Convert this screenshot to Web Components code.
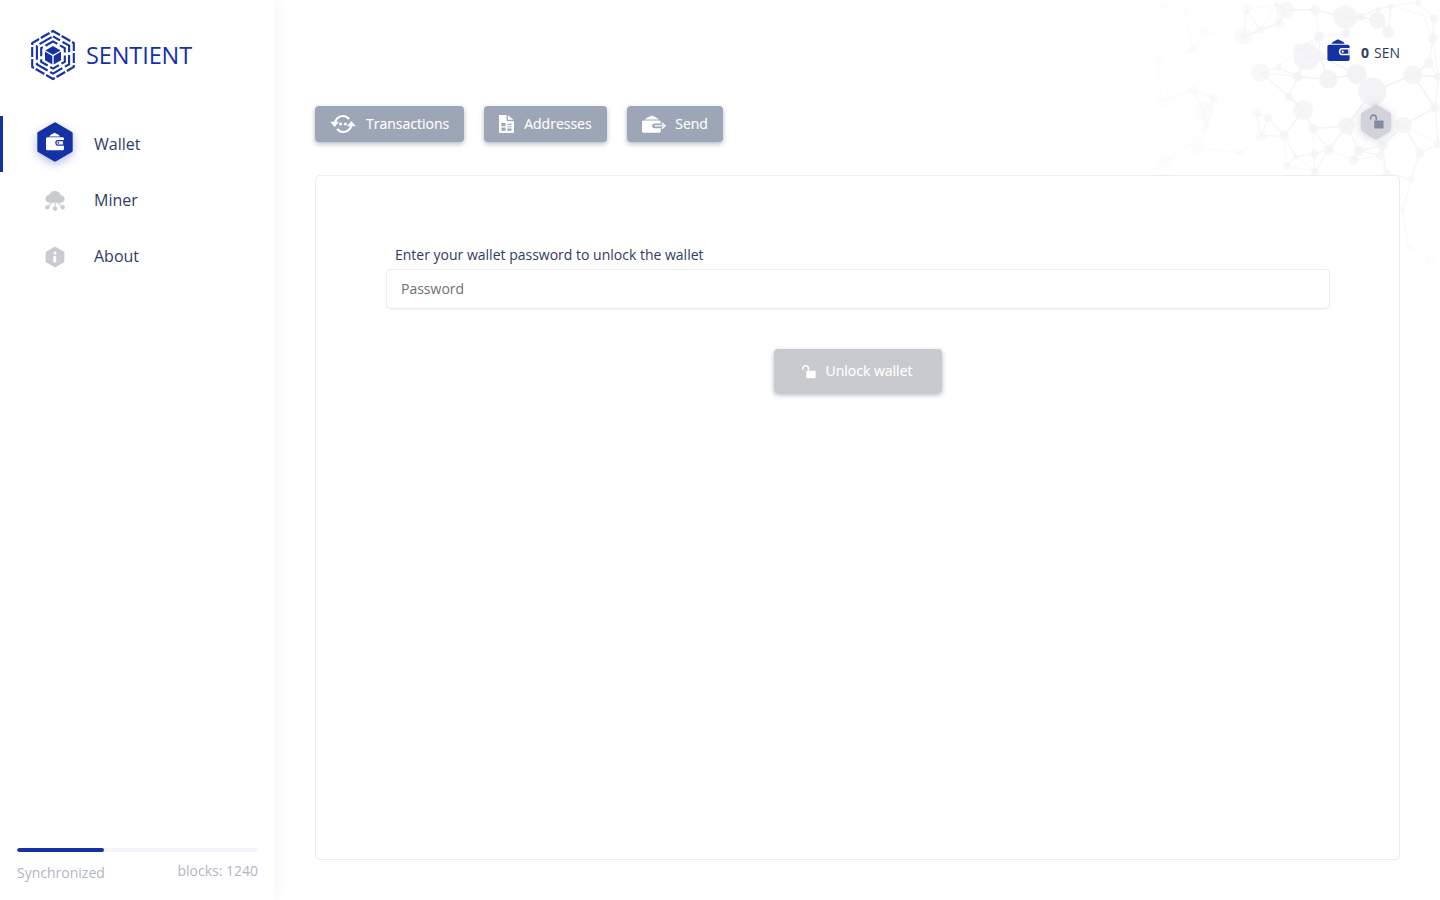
<!DOCTYPE html>
<html lang="en"><head><meta charset="utf-8"><title>Sentient</title>
<style>
html,body{margin:0;height:100%;background:#fff;font-family:"Open Sans","Noto Sans",sans-serif;color:#303c5e}
</style></head><body>
<app-shell>
  <side-bar slot="side">
    <brand-logo></brand-logo>
    <nav-item active icon="wallet">Wallet</nav-item>
    <nav-item icon="miner">Miner</nav-item>
    <nav-item icon="about">About</nav-item>
    <sync-status slot="foot" blocks="1240" percent="36"></sync-status>
  </side-bar>
  <main-view>
    <network-bg slot="bg"></network-bg>
    <wallet-balance slot="top" amount="0" unit="SEN"></wallet-balance>
    <tab-button slot="tabs" icon="tx">Transactions</tab-button>
    <tab-button slot="tabs" icon="addr">Addresses</tab-button>
    <tab-button slot="tabs" icon="send">Send</tab-button>
    <lock-badge slot="lock"></lock-badge>
    <content-card><unlock-form></unlock-form></content-card>
  </main-view>
</app-shell>
<script>
const BLUE='#1431a6';
const walletIcon=(fg,bg)=>`<path fill="${fg}" d="M4.6 5.6 6 3.6 11.4 .8 17.2 3.6 18.4 5.6Z"/><path fill="${fg}" d="M2.4 6.4H21.6C22.8 6.4 23.6 7.2 23.6 8.4V21.4C23.6 22.6 22.8 23.4 21.6 23.4H2.4C1.2 23.4.4 22.6.4 21.4V8.4C.4 7.2 1.2 6.4 2.4 6.4Z"/><path fill="${bg}" d="M15.4 10H23.6V17.4H15.4C13.4 17.4 12.4 15.8 12.4 13.7 12.4 11.6 13.4 10 15.4 10Z"/><path fill="${fg}" d="M15.6 11.6H22.2V15.8H15.6C14.6 15.8 14 14.9 14 13.7 14 12.5 14.6 11.6 15.6 11.6Z"/><circle cx="16.4" cy="13.7" r="1.1" fill="${bg}"/>`;
const ICONS={
 miner:c=>`<path fill="${c}" d="M6 14C2.8 14 .5 12 .5 9.2 .5 6.8 2.4 5 4.8 4.8 5.8 2 8.8 0 12 0 15.4 0 18.2 2.2 19 5 21.6 5 23.5 7 23.5 9.6 23.5 12.2 21.4 14 18 14Z"/><path stroke="${c}" stroke-width="1.3" fill="none" d="M12 13V20M9 13 4 18.5M15 13 20 18.5"/><circle cx="12" cy="21.2" r="2.6" fill="${c}"/><circle cx="2.8" cy="19.6" r="2.6" fill="${c}"/><circle cx="21.2" cy="19.6" r="2.6" fill="${c}"/>`,
 tx:c=>`<g fill="none" stroke="${c}" stroke-width="2.3" stroke-linecap="round"><path d="M4.8 12C5.2 7 9 3.2 13.4 3.2 16 3.2 18 4.4 19.2 6"/><path d="M22.4 12C22 17 18.2 20.8 13.8 20.8 11.4 20.8 9.4 19.8 8 18"/></g><path fill="${c}" d="M.2 9.6H9.4L4.8 15.2ZM17.6 14.4H26.8L22.2 8.8Z"/><circle cx="11" cy="12" r="1.7" fill="${c}"/><circle cx="16" cy="12" r="1.7" fill="${c}"/>`,
 addr:c=>`<path fill="${c}" fill-rule="evenodd" d="M4 2H12V8.6H20V20.6C20 21.4 19.4 22 18.6 22H5.4C4.6 22 4 21.4 4 20.6ZM6.6 11V14.4H11V11ZM12.8 11.6V13H17.4V11.6ZM12.8 14.4V15.6H17.4V14.4ZM6.6 16V19.4H11V16ZM12.8 17V19.4H17.4V17Z"/><path fill="${c}" d="M13.4 2.4 19.6 7.4H13.4Z"/>`,
 send:c=>`<path fill="${c}" d="M2.6 4.6 4 3.2 10 .4 15.4 3.2 16.6 4.6Z"/><path fill="${c}" d="M1.6 5.4H17C18 5.4 18.8 6.2 18.8 7.2V8.4H12.6C11 8.4 10 9.4 10 10.8 10 12.2 11 13.2 12.6 13.2H18.8V16C18.8 17 18 17.8 17 17.8H1.6C.6 17.8 0 17 0 16V7C0 6 .6 5.4 1.6 5.4Z"/><path fill="none" stroke="${c}" stroke-width="1.3" d="M12.6 10.8H21.5"/><path fill="none" stroke="${c}" stroke-width="1.5" stroke-linecap="round" stroke-linejoin="round" d="M20.4 8.4 23 10.8 20.4 13.2"/>`,
 lock:c=>`<rect x="9" y="11" width="13" height="10.5" rx="1" fill="${c}"/><path fill="none" stroke="${c}" stroke-width="2.2" d="M4 9.5V8.4C4 5.6 5.8 3.8 8 3.8 10.2 3.8 12 5.6 12 8.4V11"/>`
};
const HEX='M12 1.6 21.3 7V17L12 22.4 2.7 17V7Z';
function reg(name,html,attrs){
  const t=document.createElement('template');t.innerHTML=html;
  customElements.define(name,class extends HTMLElement{
    connectedCallback(){ if(this.shadowRoot) return; const r=this.attachShadow({mode:'open'}); r.appendChild(t.content.cloneNode(true)); if(attrs) attrs(this,r);}
  });
}
reg('app-shell',`<style>:host{display:grid;grid-template-columns:275px 1fr;height:100vh;overflow:hidden}
::slotted(side-bar){z-index:2}</style><slot name="side"></slot><slot></slot>`);
reg('side-bar',`<style>:host{display:flex;flex-direction:column;background:#fff;box-shadow:0 0 12px rgba(60,70,110,.07);height:100vh}
.grow{flex:1;display:flex;flex-direction:column}</style>
<div class="grow"><slot></slot></div><slot name="foot"></slot>`);
reg('brand-logo',`<style>:host{display:flex;align-items:center;gap:10px;height:116px;box-sizing:border-box;padding:0 0 6px 30px}
svg{width:46px;height:52px;flex:none}
span{font-size:23.5px;color:${BLUE};letter-spacing:-.1px;line-height:1;padding-top:1px}</style>
<svg viewBox="-23 -26 46 52" aria-hidden="true"><g fill="none" stroke="${BLUE}" stroke-width="2.1">
<path stroke-dasharray="10 2" stroke-dashoffset="2" d="M0-24 20.8-12V12L0 24-20.8 12V-12Z"/>
<path stroke-dasharray="14 3" stroke-dashoffset="6" d="M0-18.6 16.1-9.3V9.3L0 18.6-16.1 9.3V-9.3Z"/>
<path stroke-dasharray="10 3" stroke-dashoffset="5" d="M0-13.6 11.8-6.8V6.8L0 13.6-11.8 6.8V-6.8Z"/></g>
<g fill="${BLUE}"><path d="M0-9 7.6-4.6 0-.3-7.6-4.6Z"/><path d="M-8-3.4-.7.9V9.6L-8 5.2Z"/><path d="M8-3.4.7.9V9.6L8 5.2Z"/></g></svg><span>SENTIENT</span>`);
reg('nav-item',`<style>:host{display:flex;align-items:center;height:56px;font-size:16px;color:#303c5e;position:relative;padding-left:35px;box-sizing:border-box}
:host([active])::before{content:"";position:absolute;left:0;top:0;bottom:0;width:3px;background:${BLUE}}
.ic{width:40px;height:44px;display:grid;place-items:center;margin-right:19px;position:relative}
svg{display:block;overflow:visible}
</style><div class="ic"></div><slot></slot>`,(el,r)=>{
  const k=el.getAttribute('icon'),box=r.querySelector('.ic');
  if(k==='wallet'){box.style.top='-3px';box.innerHTML=`<svg width="42" height="46" viewBox="0 0 24 24" style="margin-left:-1px;filter:drop-shadow(0 3px 5px rgba(20,49,166,.32))"><path d="${HEX}" fill="${BLUE}" stroke="${BLUE}" stroke-width="1.6" stroke-linejoin="round"/><svg x="6.7" y="6.4" width="10.6" height="10.6" viewBox="0 0 24 24">${walletIcon('#fff',BLUE)}</svg></svg>`;}
  else if(k==='miner') box.innerHTML=`<svg width="20" height="20" viewBox="0 0 24 24" style="position:relative;top:.5px">${ICONS.miner('#c9cbd1')}</svg>`;
  else box.innerHTML=`<svg width="22" height="24" viewBox="0 0 24 24" style="position:relative;top:.5px"><path d="${HEX}" fill="#c9cbd1" stroke="#c9cbd1" stroke-width="1.8" stroke-linejoin="round"/><circle cx="12" cy="7.6" r="1.7" fill="#fff"/><path d="M10 11H13.3V17.6H10.1Z" fill="#fff"/></svg>`;
});
reg('sync-status',`<style>:host{display:block;padding:0 17px 17px}
.bar{height:4px;border-radius:2px;background:#f4f5fa;overflow:hidden}.fill{height:100%;background:${BLUE};border-radius:2px}
.row{display:flex;justify-content:space-between;color:#b2b6c4;font-size:14px;line-height:20px;height:31px}
.s{padding-top:11px}.b{padding-top:9px}</style>
<div class="bar"><div class="fill"></div></div><div class="row"><span class="s">Synchronized</span><span class="b"></span></div>`,(el,r)=>{
  r.querySelector('.fill').style.width=el.getAttribute('percent')+'%';
  r.querySelector('.b').textContent='blocks: '+el.getAttribute('blocks');
});
reg('main-view',`<style>:host{display:flex;flex-direction:column;position:relative;padding:37px 40px 40px;box-sizing:border-box;height:100vh;min-width:0;background:#fff;overflow:hidden}
.top{display:flex;justify-content:flex-end;height:32px;margin-bottom:37px;position:relative}
.tabs{display:flex;gap:20px;align-items:center;height:36px;margin-bottom:33px;position:relative}
.lock{margin-left:auto;margin-right:6px;display:flex;margin-top:-4px}
.body{flex:1;display:flex;min-height:0;position:relative}</style>
<slot name="bg"></slot><div class="top"><slot name="top"></slot></div>
<div class="tabs"><slot name="tabs"></slot><div class="lock"><slot name="lock"></slot></div></div>
<div class="body"><slot></slot></div>`);
reg('network-bg',`<style>:host{position:absolute;right:0;top:0;width:310px;height:300px;pointer-events:none}svg{display:block}</style><svg width="310" height="300" viewBox="0 0 310 300" aria-hidden="true"></svg>`,(el,r)=>{
  const N=[[595,238,28],[727,275,42],[848,225,28],[680,222,30],[520,330,30],[650,378,25],[820,375,25],[757,437,15],[687,452,15],[549,386,15],[477,290,12],[503,230,15],[392,218,28],[253,295,15],[188,270,15],[222,335,30],[190,150,15],[222,95,15],[340,110,25],[390,90,12],[447,70,15],[468,30,25],[350,28,15],[555,30,15],[645,50,35],[690,50,12],[742,62,25],[775,97,18],[648,100,12],[567,110,15],[505,147,15],[570,168,15],[530,170,40],[445,203,10],[415,353,12],[380,340,15],[393,407,15],[462,408,15],[552,461,12],[595,450,15],[497,470,8],[470,497,12],[670,480,15],[750,467,12],[870,458,15],[925,432,15],[915,323,15],[908,116,15],[912,56,12],[925,230,12],[897,190,15],[783,18,8],[743,28,8],[865,8,8],[440,14,8],[95,14,8],[165,35,12],[82,180,15],[97,305,15],[118,293,8],[230,378,10],[182,433,8],[205,445,20],[100,488,25],[330,458,8],[843,537,12],[818,632,5],[900,780,15],[835,740,10],[555,515,12],[770,520,12]];
  const op=(x,y)=>{const d=Math.hypot(x-700,y-220);return Math.max(.14,Math.min(1,1.1-d/600));};
  let s='<g style="filter:blur(.35px)">';
  N.forEach((a,i)=>{
    N.map((b,j)=>[Math.hypot(a[0]-b[0],a[1]-b[1]),j]).filter(p=>p[1]!==i).sort((p,q)=>p[0]-q[0]).slice(0,3).forEach(p=>{
      const b=N[p[1]];if(p[1]<i&&p[0]>170)return;
      s+=`<line x1="${a[0]/3}" y1="${a[1]/3}" x2="${b[0]/3}" y2="${b[1]/3}" stroke="#f2f2f4" stroke-width="${a[2]>24?1.6:.9}" opacity="${op(a[0],a[1])}"/>`;
    });
  });
  N.forEach(a=>{s+=`<circle cx="${a[0]/3}" cy="${a[1]/3}" r="${a[2]/3}" fill="#f3f3f5" opacity="${op(a[0],a[1])}"/>`;});
  r.querySelector('svg').innerHTML=s+'</g>';
});
reg('wallet-balance',`<style>:host{display:flex;align-items:flex-start;font-size:14px;line-height:30px;color:#303c5e}
svg{margin:1px 11px 0 0;display:block}b{font-weight:700;margin-right:5px;padding-top:1px}span{padding-top:1px}</style>
<svg width="23" height="24" viewBox="0 0 24 24"></svg><b></b><span></span>`,(el,r)=>{
  r.querySelector('svg').innerHTML=walletIcon(BLUE,'#fff');
  r.querySelector('b').textContent=el.getAttribute('amount');r.querySelector('span').textContent=el.getAttribute('unit');
});
reg('tab-button',`<style>:host{display:inline-flex;align-items:center;height:36px;padding:0 15px 2px;border-radius:4px;background:#9ca6b6;color:#fff;font-size:14px;-webkit-text-stroke:.15px #fff;box-shadow:0 2px 5px rgba(60,75,115,.38);box-sizing:border-box;gap:9px}
svg{display:block;position:relative;top:1px}</style><svg></svg><slot></slot>`,(el,r)=>{
  const k=el.getAttribute('icon'),s=r.querySelector('svg');
  const m={tx:[26,22,'0 0 27 24',10],addr:[15,18,'4 2 16 20',10],send:[24,18,'0 0 24 18',9.6]}[k];
  s.setAttribute('width',m[0]);s.setAttribute('height',m[1]);s.setAttribute('viewBox',m[2]);s.style.marginRight=(m[3]-9)+'px';s.setAttribute('preserveAspectRatio','none');
  s.innerHTML=ICONS[k]('#fff');
});
reg('lock-badge',`<style>:host{display:block;width:36px;height:38px}svg{display:block;overflow:visible}</style>
<svg width="36" height="38" viewBox="0 0 24 24" preserveAspectRatio="none" style="filter:drop-shadow(0 1px 5px rgba(120,125,150,.35))"><path d="${HEX}" fill="#d2d3da" stroke="#d2d3da" stroke-width="1.5" stroke-linejoin="round"/><svg x="6.5" y="5.8" width="11.5" height="11.5" viewBox="0 0 24 24">${ICONS.lock('#858ba0')}</svg></svg>`);
reg('content-card',`<style>:host{display:block;flex:1;background:#fff;border:1px solid #ececef;border-radius:5px;box-sizing:border-box;padding:69px 69px 0 70px}</style><slot></slot>`);
reg('unlock-form',`<style>:host{display:flex;flex-direction:column}
label{font-size:14px;line-height:20px;padding-left:9px;margin-bottom:4px;color:#303c5e}
input{height:40px;box-sizing:border-box;width:100%;border:1px solid #ececef;border-radius:5px;padding:0 14px 2px;font:14px "Open Sans","Noto Sans",sans-serif;color:#333;background:#fff;box-shadow:0 1px 2px rgba(60,70,110,.05);outline:none}
input::placeholder{color:#6f6f6f;opacity:1}
button{align-self:center;margin-top:40px;height:44px;width:168px;border:0;border-radius:4px;background:#c9cad0;color:#fff;font:14px "Open Sans","Noto Sans",sans-serif;-webkit-text-stroke:.15px #fff;display:flex;align-items:center;justify-content:center;gap:9px;box-shadow:0 2px 5px rgba(60,75,115,.38);padding:0 4px 2px 0}
svg{display:block;position:relative;top:1px}</style>
<label for="p">Enter your wallet password to unlock the wallet</label>
<input id="p" type="password" placeholder="Password">
<button type="button" disabled><svg width="17" height="17" viewBox="0 0 24 24">${ICONS.lock('#fff')}</svg>Unlock wallet</button>`);
</script>
</body></html>
